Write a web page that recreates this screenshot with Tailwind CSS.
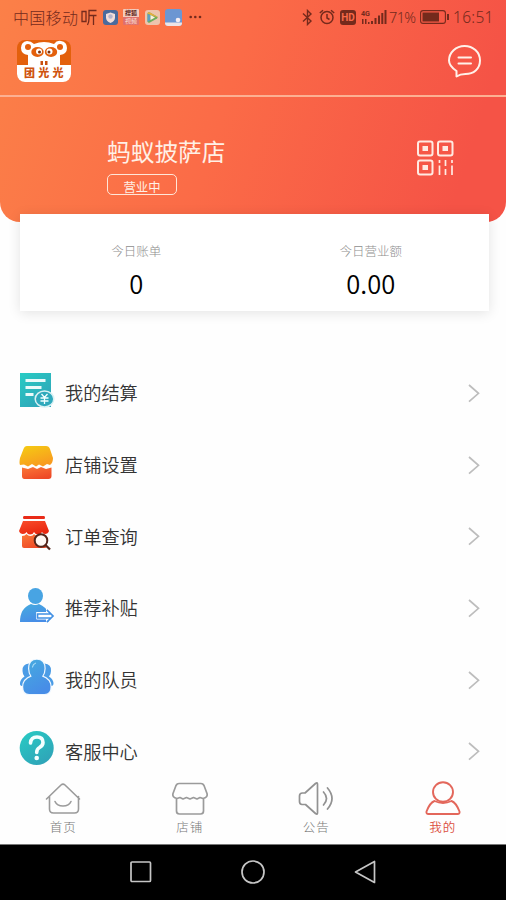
<!DOCTYPE html>
<html lang="zh-CN">
<head>
<meta charset="utf-8">
<title>我的</title>
<script src="https://cdn.jsdelivr.net/npm/@tailwindcss/browser@4"></script>
</head>
<body class="w-[506px] h-[900px] overflow-hidden bg-[#fefefe] flex flex-col font-['Noto_Sans_CJK_SC',sans-serif]">
<header class="h-[222px] shrink-0 rounded-b-[20px] bg-[linear-gradient(108deg,#fb8048_0%,#fb6b47_45%,#f55346_90%)] flex flex-col">
  <div class="h-[34px] shrink-0 flex items-center pl-[13px] pr-3 text-[#742a1c]">
    <span class="text-[16px] leading-[34px] whitespace-nowrap w-[68px] font-light tracking-[0.3px]">中国移动</span>
    <svg class="w-4 h-[17px]" viewBox="0 0 16 17" fill="none" stroke="currentColor" stroke-width="1.3"><path d="M1 2.500h4v10H1zM15.500 1.500H8v8q0 4-1.500 6.500M8 6.500h7.500M12.500 6.500V16"/></svg>
    <svg class="w-[15px] h-[15px] ml-[6px]" viewBox="0 0 15 15"><rect width="15" height="15" rx="3" fill="#4b6a9c"/><path d="M7.500 2.500 12 4v3.500q0 3.500-4.500 5.500Q3 11 3 7.500V4z" fill="#f3ddd8"/><circle cx="7.500" cy="6.500" r="2.200" fill="#b6b4cc"/></svg>
    <span class="w-4 h-4 ml-[5px] rounded-[1px] bg-[linear-gradient(#f4cbbd_50%,#e0706c_50%)] flex flex-col items-center text-[6px] leading-[8px] whitespace-nowrap"><span class="font-bold text-[#5b2520]">搜狐</span><span class="text-[#fbe2da]">视频</span></span>
    <svg class="w-[15px] h-[15px] ml-[6px]" viewBox="0 0 15 15"><rect width="15" height="15" rx="3" fill="#edc4ad"/><path d="M2.500 3.500Q3 1.500 5 2.500L12 6.500Q13.500 7.500 12 8.500L5 12.500Q3 13.500 2.500 11.500z" fill="#6cae5c"/><path d="M2.500 3.500Q3 1.500 5 2.500L12 6.500 13 7.500 5.500 5z" fill="#e9ae3c"/><path d="M2.500 4 5.500 5v5l-3 2z" fill="#5c9fc4"/><path d="M5.500 5v5L10 7.500z" fill="#fff0df"/></svg>
    <svg class="w-[17px] h-[17px] ml-[5px]" viewBox="0 0 17 17"><rect width="17" height="17" rx="3" fill="#6c96d2"/><path d="M0 13.500h17v.5q0 3-3 3H3q-3 0-3-3z" fill="#eee4e6"/><circle cx="13" cy="11" r="2.300" fill="#f3edf2"/></svg>
    <svg class="w-[13px] h-1 ml-[7px]" viewBox="0 0 13 4" fill="currentColor"><circle cx="1.700" cy="2" r="1.300"/><circle cx="6.300" cy="2" r="1.300"/><circle cx="11" cy="2" r="1.300"/></svg>
    <svg class="w-[11px] h-[17px] ml-auto" viewBox="0 0 11 17" fill="none" stroke="currentColor" stroke-width="1.400"><path d="M1 4.500 9 12 5.500 15.500V1.500L9 5 1 12.500"/></svg>
    <svg class="w-4 h-4 ml-[6px]" viewBox="0 0 16 16" fill="none" stroke="currentColor" stroke-width="1.500"><circle cx="8" cy="8.500" r="6"/><path d="M8 5v4l2.500 1.500M.8 4 4 1.200M15.200 4 12 1.200"/></svg>
    <span class="w-4 h-[15px] ml-[5px] rounded-[3px] bg-[#742a1c] text-[#f86a4a] text-[10px] leading-[15px] font-bold text-center font-['Roboto',sans-serif]">HD</span>
    <svg class="w-[26px] h-4 ml-[5px]" viewBox="0 0 26 16" fill="currentColor"><text x="0" y="7" font-size="8" font-weight="700" font-family="Roboto" textLength="9" lengthAdjust="spacingAndGlyphs">4G</text><path d="M1 10h1.500v5H1zM4 10h1.500v5H4zM7 13h1.500v2H7zM10 12h2v3h-2zM13.500 9h2v6h-2zM17 6.500h2V15h-2zM20.300 4h2v11h-2zM23.500 1h2v14h-2z"/></svg>
    <span class="w-[27px] ml-[2px] text-[14.500px] leading-[34px] font-light whitespace-nowrap font-['Noto_Sans',sans-serif] tracking-[-0.6px]">71%</span>
    <svg class="w-[29px] h-[14px] ml-1" viewBox="0 0 29 14"><rect x=".6" y=".6" width="24.800" height="12.800" rx="2.500" fill="none" stroke="#742a1c" stroke-width="1.100"/><path d="M2.500 2.500H19v9H2.500z" fill="#742a1c"/><path d="M27 4h2v6h-2z" fill="#742a1c"/></svg>
    <span class="w-[41px] ml-[4px] text-[15.500px] leading-[34px] font-light whitespace-nowrap font-['Noto_Sans',sans-serif] tracking-[0.3px]">16:51</span>
  </div>
  <div class="h-[63px] shrink-0 border-b-2 border-[#fcb092] flex items-start justify-between pl-[17px] pr-[24px] pt-[6px]">
    <svg class="w-[54px] h-[42px]" viewBox="0 0 54 42"><defs><clipPath id="lg"><rect width="54" height="42" rx="8"/></clipPath></defs><g clip-path="url(#lg)"><path d="M0 0h54v42H0z" fill="#e3600c"/><path d="M0 25h11V15Q4 14 4 8q0-6 6-7 4 0 7 3 10-4 20 0 3-4 7-3 6 1 6 7 0 6-7 7v10h11v17H0z" fill="#fff"/></g><circle cx="11" cy="7" r="3" fill="#e3600c"/><circle cx="43" cy="7" r="3" fill="#e3600c"/><ellipse cx="20.500" cy="12" rx="6.200" ry="5" fill="#e3600c"/><ellipse cx="34" cy="12" rx="6.200" ry="5" fill="#e3600c"/><circle cx="22" cy="11.500" r="3" fill="#fff"/><circle cx="32.500" cy="11.500" r="3" fill="#fff"/><circle cx="22.500" cy="12" r="1.500" fill="#7a3212"/><circle cx="32" cy="12" r="1.500" fill="#7a3212"/><path d="M23.500 21h2.500v4h-2.500zM28 21h2.500v4H28z" fill="#c94f10"/><text x="7" y="37" font-size="11" font-weight="900" letter-spacing="3.200" fill="#cf5410">团光光</text></svg>
    <svg class="w-[34px] h-[34px] mt-[4px]" viewBox="0 0 34 34" fill="none" stroke="#fff1e9" stroke-width="2" stroke-linejoin="round" stroke-linecap="round"><path d="M8.500 32.500V27C4 24 1 20.500 1 16.500 1 8.500 8 2 16.500 2S32 8 32 16.500 25.500 30 17.500 30Q12 30 8.500 32.500z"/><path d="M10.500 13.500h12.500M10.500 19.500h12.500"/></svg>
  </div>
  <div class="flex-1 flex justify-between pl-[107px] pr-[52px]">
    <div class="pt-[36px]">
      <h1 class="text-[23.700px] leading-[36px] font-normal text-[#fff0e6] whitespace-nowrap">蚂蚁披萨店</h1>
      <div class="mt-[5px] w-[70px] h-[21px] rounded-[5px] border-[1.5px] border-[#ffe6d8] text-[#fff0e6] text-[12.300px] leading-[25px] text-center">营业中</div>
    </div>
    <svg class="w-[37px] h-[36px] mt-[43px]" viewBox="0 0 37 36" fill="none" stroke="#ffeae2" stroke-width="2"><rect x="1" y="1.500" width="14.500" height="14" rx="2"/><rect x="21" y="1.500" width="14.500" height="14" rx="2"/><rect x="1" y="20.500" width="14.500" height="14" rx="2"/><path fill="#ffeae2" stroke="none" d="M5.500 6h5.500v5H5.500zM25.500 6H31v5h-5.500zM5.500 25H11v5H5.500z"/><path d="M22.500 20v3M22.500 25.500V35M28.500 20v6M28.500 29v6M35 20v3M35 25.500V35" stroke-width="1.700"/></svg>
  </div>
</header>
<section class="h-[97px] shrink-0 -mt-2 ml-[20px] mr-[17px] bg-white shadow-[0_2px_12px_rgba(0,0,0,0.11)] grid grid-cols-2 text-center">
  <div class="pt-[27px] pr-[2px]"><div class="text-[12.500px] leading-[20px] text-[#8e8e8e] font-light">今日账单</div><div class="mt-[7px] text-[25.500px] leading-[30px] text-black font-[350]">0</div></div>
  <div class="pt-[27px] pr-[2px]"><div class="text-[12.500px] leading-[20px] text-[#8e8e8e] font-light">今日营业额</div><div class="mt-[7px] text-[25.500px] leading-[30px] text-black font-[350]">0.00</div></div>
</section>
<svg width="0" height="0" class="absolute"><defs>
  <linearGradient id="teal" x2=".7" y2="1"><stop stop-color="#28ccc4"/><stop offset="1" stop-color="#2fa4b8"/></linearGradient>
  <linearGradient id="sun" x2=".5" y2="1"><stop stop-color="#f5cd12"/><stop offset="1" stop-color="#f89b20"/></linearGradient>
  <linearGradient id="org" x2=".6" y2="1"><stop stop-color="#fb7838"/><stop offset="1" stop-color="#ee4926"/></linearGradient>
  <linearGradient id="red" y2="1" x2=".5"><stop stop-color="#f94d2b"/><stop offset="1" stop-color="#e9270f"/></linearGradient>
  <linearGradient id="blue" x2=".5" y2="1"><stop stop-color="#46acdf"/><stop offset="1" stop-color="#478de7"/></linearGradient>
</defs></svg>
<main class="mt-[46px] h-[418px] shrink-0 overflow-hidden grid auto-rows-[71.700px] text-[18.200px] text-[#333] font-[350]">
  <div class="flex items-center pl-[19px] pr-[25px]"><svg class="w-[36px] h-[36px] -mt-[6px]" viewBox="0 0 36 36"><path d="M1 1h31v34H1z" fill="url(#teal)"/><path d="M6.500 8.500h20M6.500 15.500h16M6.500 22.500h8" stroke="#eafafa" stroke-width="3"/><ellipse cx="25.500" cy="27" rx="9.300" ry="8" fill="#2fa9bc" stroke="#d9f1f4" stroke-width="1.500"/><path d="m22.500 22 3 3.500 3-3.500M25.500 25.500V32M21.500 26h8M21.500 29h8" stroke="#f2ffff" stroke-width="1.300" fill="none"/></svg><span class="ml-[10px] flex-1">我的结算</span><svg class="w-[14px] h-[20px]" viewBox="0 0 14 20" fill="none" stroke="#bdbdbd" stroke-width="1.700"><path d="m2 2 9.500 8.300L2 18.600"/></svg></div>
  <div class="flex items-center pl-[19px] pr-[25px]"><svg class="w-[36px] h-[36px] -mt-[6px]" viewBox="0 0 36 36"><path d="M8 2h19q3 0 4 3l3 9q0 5-3 7l-3-1-4 2.500-4-2-3 2-4-2.500-4 2.500-4-2-4 .5Q0 19 1 14L4.500 5Q5.500 2 8 2z" fill="url(#sun)"/><path d="M3 23.500 9 25l5-2 4 2 4-2 5 2 5.500-1.500V32q0 3-3 3h-24q-2.500 0-2.500-3z" fill="url(#org)"/></svg><span class="ml-[10px] flex-1">店铺设置</span><svg class="w-[14px] h-[20px]" viewBox="0 0 14 20" fill="none" stroke="#bdbdbd" stroke-width="1.700"><path d="m2 2 9.500 8.300L2 18.600"/></svg></div>
  <div class="flex items-center pl-[19px] pr-[25px]"><svg class="w-[36px] h-[36px] -mt-[6px]" viewBox="0 0 36 36"><path d="M5 1h20q1 0 1 1.500T25 4H5Q4 4 4 2.500T5 1z" fill="#e92b18"/><path d="M4 6h22l4 10q-1 3-4 3-2 0-3-2-1 2.500-4 2.500-2.500 0-4-2.500-1 2.500-4 2.500-2.500 0-3.500-2.500Q6.500 19 4 19q-3 0-4-3z" fill="url(#red)"/><path d="M3 21q3 0 4.500-2 1.500 2 4 2t3.500-2q1.500 2 4 2t4-2q2 2 4.500 2v11q0 1-2 1H5q-2 0-2-2z" fill="url(#org)"/><circle cx="22" cy="25.500" r="6.300" fill="#fff8f4" stroke="#54251a" stroke-width="2"/><path d="m26.500 30 4.500 4.500" stroke="#54251a" stroke-width="2.300"/></svg><span class="ml-[10px] flex-1">订单查询</span><svg class="w-[14px] h-[20px]" viewBox="0 0 14 20" fill="none" stroke="#bdbdbd" stroke-width="1.700"><path d="m2 2 9.500 8.300L2 18.600"/></svg></div>
  <div class="flex items-center pl-[19px] pr-[25px]"><svg class="w-[36px] h-[36px] -mt-[6px]" viewBox="0 0 36 36"><ellipse cx="16.500" cy="9" rx="7.500" ry="8" fill="#48a4e3"/><path d="M12 17q4 2 8 0 7 3 9.500 9V35H1Q1 21 12 17z" fill="url(#blue)"/><path d="M17.500 25.500h10v-3.500L34 28.800 27.500 35.500V32h-10z" fill="#fff" stroke="#fff" stroke-width="1"/><path d="M32 27H18.500v4H32M27.800 22.800l6.200 6.200-6.200 6.200" fill="none" stroke="#4391e4" stroke-width="1.700"/></svg><span class="ml-[10px] flex-1">推荐补贴</span><svg class="w-[14px] h-[20px]" viewBox="0 0 14 20" fill="none" stroke="#bdbdbd" stroke-width="1.700"><path d="m2 2 9.500 8.300L2 18.600"/></svg></div>
  <div class="flex items-center pl-[19px] pr-[25px]"><svg class="w-[36px] h-[36px] -mt-[6px]" viewBox="0 0 36 36"><path d="M10 4.500Q3 5 3.500 12q0 3 2 5.500Q1 20 1 25q0 2 3 2h28q2.500 0 2.500-2 0-5-4.500-7.500 2-2.500 2-5.500.5-7-6.500-7.500z" fill="#4b9ce6"/><path d="M17.800.8Q25.500 1 25.500 9.500q0 4.500-2.500 8 8.500 3 8.500 10.500 0 7-6 7H10.200q-6 0-6-7 0-7.500 8.500-10.500-2.500-3.500-2.500-8Q10.200 1 17.800.8z" fill="#eef7ff" stroke="#eef7ff" stroke-width="2.400"/><path d="M17.800.8Q25.500 1 25.500 9.500q0 4.500-2.500 8 8.500 3 8.500 10.500 0 7-6 7H10.200q-6 0-6-7 0-7.500 8.500-10.500-2.500-3.500-2.500-8Q10.200 1 17.800.8z" fill="url(#blue)"/><path d="M13.500 8q.5-3 3-3.800" fill="none" stroke="#a5d9f5" stroke-width="1.200" stroke-linecap="round"/></svg><span class="ml-[10px] flex-1">我的队员</span><svg class="w-[14px] h-[20px]" viewBox="0 0 14 20" fill="none" stroke="#bdbdbd" stroke-width="1.700"><path d="m2 2 9.500 8.300L2 18.600"/></svg></div>
  <div class="flex items-center pl-[19px] pr-[25px]"><svg class="w-[36px] h-[36px] -mt-[6px]" viewBox="0 0 36 36"><circle cx="17.700" cy="18" r="17" fill="url(#teal)"/><path d="M11.500 13q.5-6 6.500-6 6 0 6 5.500 0 3-3.500 5-2.800 1.500-2.800 5" fill="none" stroke="#f3ffff" stroke-width="3.600" stroke-linecap="round"/><circle cx="17.700" cy="28" r="2.300" fill="#f3ffff"/></svg><span class="ml-[10px] flex-1">客服中心</span><svg class="w-[14px] h-[20px]" viewBox="0 0 14 20" fill="none" stroke="#bdbdbd" stroke-width="1.700"><path d="m2 2 9.500 8.300L2 18.600"/></svg></div>
</main>
<nav class="flex-1 grid grid-cols-4 pt-[6px] text-[12.500px] leading-[20px] text-[#777] font-light tracking-[1px]">
  <div class="flex flex-col items-center"><svg class="w-9 h-9" viewBox="0 0 36 36" fill="none" stroke="#9b9b9b" stroke-width="1.600" stroke-linecap="round" stroke-linejoin="round"><path d="M1.500 18 16 4q2-1.800 4 0l14.500 14M4.500 15.500V28q0 4 4 4h21q4 0 4-4V15.500M10 20.500q2 4.500 8 4.500t8-4.500"/></svg><span>首页</span></div>
  <div class="flex flex-col items-center"><svg class="w-9 h-9" viewBox="0 0 36 36" fill="none" stroke="#9b9b9b" stroke-width="1.700" stroke-linejoin="round"><path d="M7 2.500h22q2 0 3 2l3 8q1 4-4 5l-3-1-3 1.500-3.500-1.500-3.500 1.500-3.500-1.500-3.500 1.500L8 16.500l-3 1q-5-1-4-5l3-8q1-2 3-2zM4.500 17.500V30q0 3 3 3h21q3 0 3-3V17.500"/></svg><span>店铺</span></div>
  <div class="flex flex-col items-center"><svg class="w-9 h-9" viewBox="0 0 36 36" fill="none" stroke="#929292" stroke-width="1.700" stroke-linejoin="round" stroke-linecap="round"><path d="M7 12 17.500 2.500q2-1.500 2 .5v29q0 2-2 .5L7.500 23.500H4q-2.500 0-2.500-3V15q0-3 3-3zM25.500 11q6 6.500 0 13M29.500 7q9 10.500 0 21"/></svg><span>公告</span></div>
  <div class="flex flex-col items-center text-[#dc4f40] font-[350]"><svg class="w-9 h-9" viewBox="0 0 36 36" fill="none" stroke="#e3675b" stroke-width="1.900" stroke-linejoin="round"><ellipse cx="18" cy="11" rx="10" ry="9.800"/><path d="M9.500 20Q18 24 26.500 20 31 21.500 34.500 30.500q.5 2.500-2 2.500h-29Q1 33 1.500 30.500 5 21.500 9.500 20z"/></svg><span>我的</span></div>
</nav>
<footer class="h-[56.500px] shrink-0 bg-black flex justify-center items-center gap-[88px] border-t border-[#777]">
  <svg class="w-6 h-6" viewBox="0 0 24 24" fill="none" stroke="#c6c6c6" stroke-width="1.700"><rect x="2" y="2" width="19.500" height="19.500" rx="1"/></svg>
  <svg class="w-6 h-6" viewBox="0 0 24 24" fill="none" stroke="#c6c6c6" stroke-width="1.700"><circle cx="12" cy="12" r="11"/></svg>
  <svg class="w-6 h-6" viewBox="0 0 24 24" fill="none" stroke="#c6c6c6" stroke-width="1.700" stroke-linejoin="round"><path d="M21.500 1.500v21L2.500 12z"/></svg>
</footer>
</body>
</html>
